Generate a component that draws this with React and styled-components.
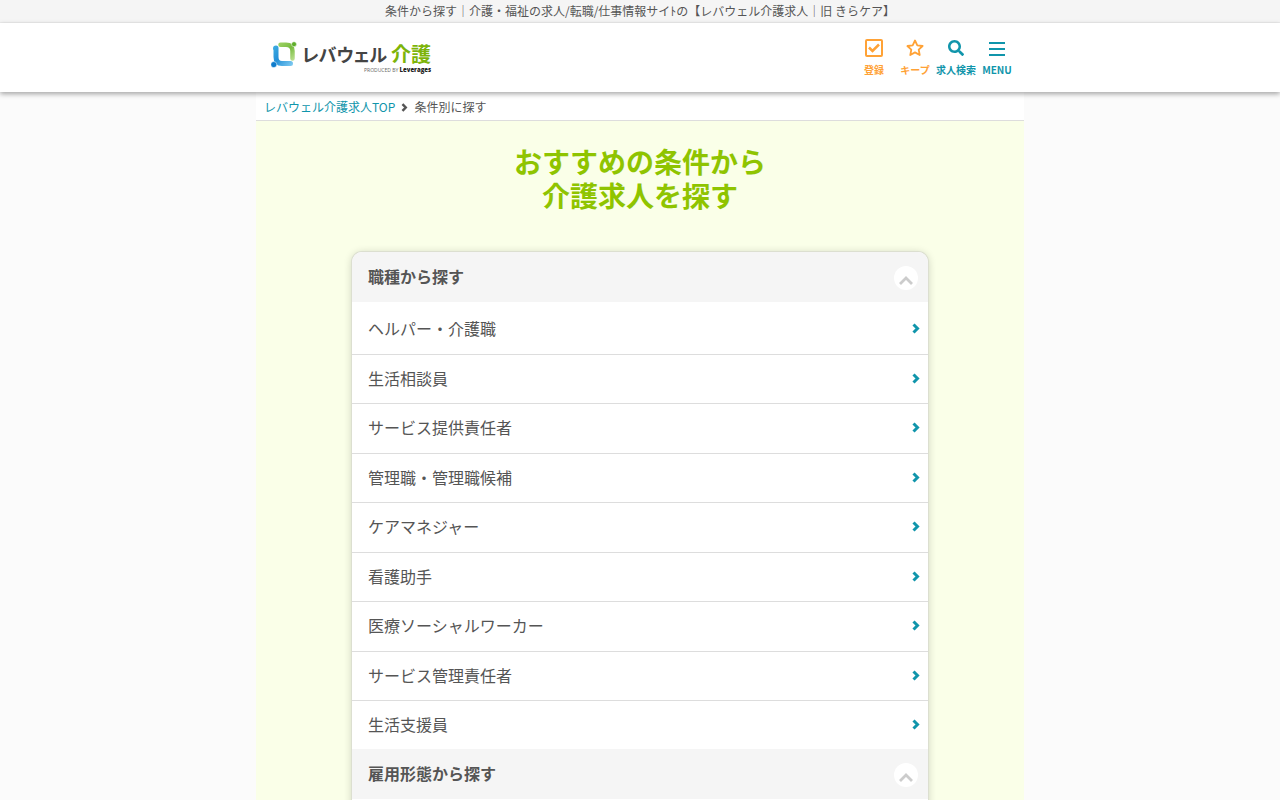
import React, { useState } from 'react';
import styled, { createGlobalStyle } from 'styled-components';
import { FaSearch } from 'react-icons/fa';

const GlobalStyle = createGlobalStyle`
  * {
    box-sizing: border-box;
  }
  body {
    margin: 0;
    background: #fbfbfb;
    color: #555;
    font-family: 'Noto Sans CJK JP', sans-serif;
    font-size: 16px;
    line-height: 26px;
  }
  a {
    color: #1095ab;
    text-decoration: none;
  }
`;

const sections = [
  {
    title: '職種から探す',
    items: [
      'ヘルパー・介護職',
      '生活相談員',
      'サービス提供責任者',
      '管理職・管理職候補',
      'ケアマネジャー',
      '看護助手',
      '医療ソーシャルワーカー',
      'サービス管理責任者',
      '生活支援員',
    ],
  },
  {
    title: '雇用形態から探す',
    items: [],
  },
];

const LogoMark = () => (
  <svg width='26' height='27' viewBox='0 0 26 27' fill='none' aria-hidden='true'>
    <defs>
      <linearGradient id='logoBlue' x1='2' y1='8' x2='21' y2='24' gradientUnits='userSpaceOnUse'>
        <stop offset='0' stopColor='#3ba9e0' />
        <stop offset='0.4' stopColor='#2490d8' />
        <stop offset='1' stopColor='#7cc8f0' />
      </linearGradient>
      <linearGradient id='logoGreen' x1='8' y1='3' x2='22' y2='19' gradientUnits='userSpaceOnUse'>
        <stop offset='0' stopColor='#9bd062' />
        <stop offset='0.5' stopColor='#78bc40' />
        <stop offset='1' stopColor='#b8de8c' />
      </linearGradient>
    </defs>
    <path d='M4.5 7.5Q4.5 7 5 7V16Q5 22.5 11 22.5H19.5' stroke='url(#logoBlue)' strokeWidth='5' strokeLinecap='round' strokeLinejoin='round' />
    <path d='M9.5 3.8H15Q21.5 3.8 21.5 10V17.5' stroke='url(#logoGreen)' strokeWidth='4.5' strokeLinecap='round' />
    <circle cx='2.8' cy='23.6' r='3' fill='#0f7ccc' stroke='#fff' strokeWidth='0.5' />
    <circle cx='23' cy='3.2' r='2.5' fill='#5fae2b' stroke='#fff' strokeWidth='0.5' />
  </svg>
);

const CheckIcon = () => (
  <svg width='18' height='18' viewBox='0 0 18 18' fill='none' stroke='currentColor' strokeWidth='2'>
    <rect x='1' y='1' width='16' height='16' rx='1' />
    <path d='M4 8.5 L7.5 12 L14 5.5' strokeWidth='2.5' />
  </svg>
);

const StarIcon = () => (
  <svg width='18' height='18' viewBox='0 0 18 18' fill='none' stroke='currentColor' strokeWidth='1.8' strokeLinejoin='round'>
    <path d='M9 1.5 L11.3 6.3 L16.6 7 L12.7 10.7 L13.7 16 L9 13.4 L4.3 16 L5.3 10.7 L1.4 7 L6.7 6.3 Z' />
  </svg>
);

const MenuIcon = () => (
  <svg width='16' height='16' viewBox='0 0 16 16' fill='currentColor'>
    <path d='M0 2h16v2H0zM0 8h16v2H0zM0 14h16v2H0z' />
  </svg>
);

const ArrowRight = ({ width = 8, height = 11 }) => (
  <svg width={width} height={height} viewBox='0 0 8 11' fill='none' stroke='currentColor' strokeWidth='3'>
    <path d='M1.5 1.5 L5.5 5.5 L1.5 9.5' />
  </svg>
);

const ArrowUp = () => (
  <svg width='14' height='9' viewBox='0 0 14 9' fill='none' stroke='currentColor' strokeWidth='2.8'>
    <path d='M1 8 L7 2 L13 8' />
  </svg>
);

const SearchSection = ({ title, items }) => {
  const [open, setOpen] = useState(true);
  return (
    <section>
      <SectionTitle>
        <SectionButton type='button' aria-expanded={open} onClick={() => setOpen(!open)}>
          {title}
          <Toggle $open={open}>
            <ArrowUp />
          </Toggle>
        </SectionButton>
      </SectionTitle>
      {open && (
        <List>
          {items.map((item) => (
            <Item key={item}>
              <ItemLink href='#'>
                {item}
                <ArrowRight />
              </ItemLink>
            </Item>
          ))}
        </List>
      )}
    </section>
  );
};

const App = () => {
  return (
    <>
      <GlobalStyle />
      <TopText>条件から探す｜介護・福祉の求人/転職/仕事情報サイﾄの【レバウェル介護求人｜旧 きらケア】</TopText>
      <Header>
        <HeaderInner>
          <Logo href='#' aria-label='レバウェル介護'>
            <LogoMark />
            <LogoText>
              <LogoName>
                レバウェル<LogoCare>介護</LogoCare>
              </LogoName>
              <LogoSub>
                PRODUCED BY <b>Leverages</b>
              </LogoSub>
            </LogoText>
          </Logo>
          <Nav>
            <NavLink href='#' $accent>
              <NavIcon>
                <CheckIcon />
              </NavIcon>
              登録
            </NavLink>
            <NavLink href='#' $accent>
              <NavIcon>
                <StarIcon />
              </NavIcon>
              キープ
            </NavLink>
            <NavLink href='#'>
              <NavIcon>
                <FaSearch size={16} />
              </NavIcon>
              求人検索
            </NavLink>
            <MenuButton type='button'>
              <NavIcon>
                <MenuIcon />
              </NavIcon>
              MENU
            </MenuButton>
          </Nav>
        </HeaderInner>
      </Header>
      <Container>
        <Breadcrumb>
          <a href='#'>レバウェル介護求人TOP</a>
          <ArrowRight width={7} height={9} />
          <span>条件別に探す</span>
        </Breadcrumb>
        <Main>
          <Title>
            おすすめの条件から
            <br />
            介護求人を探す
          </Title>
          <Card>
            {sections.map((section) => (
              <SearchSection key={section.title} {...section} />
            ))}
          </Card>
        </Main>
      </Container>
    </>
  );
};

export default App;

const TopText = styled.p`
  margin: 0;
  background: #f5f5f5;
  border-bottom: 1px solid #eee;
  font-size: 12px;
  line-height: 22px;
  text-align: center;
`;

const Header = styled.header`
  position: relative;
  background: #fff;
  box-shadow: 0 2px 5px rgba(0, 0, 0, 0.35);
`;

const HeaderInner = styled.div`
  display: flex;
  justify-content: space-between;
  align-items: flex-start;
  max-width: 768px;
  margin: 0 auto;
  padding: 15px 7px 12px 15px;
`;

const Logo = styled.a`
  display: flex;
  gap: 5px;
  padding-top: 3px;
`;

const LogoText = styled.span`
  display: flex;
  flex-direction: column;
`;

const LogoName = styled.span`
  display: flex;
  align-items: center;
  gap: 4px;
  color: #444;
  font-size: 18px;
  font-weight: 700;
  line-height: 26px;
  font-feature-settings: 'palt';
  white-space: nowrap;
`;

const LogoCare = styled.span`
  color: #7db40a;
  font-size: 20px;
`;

const LogoSub = styled.span`
  color: #666;
  font-family: 'Open Sans', sans-serif;
  font-size: 5px;
  line-height: 6px;
  text-align: right;
  b {
    color: #222;
    font-size: 6px;
    font-weight: 800;
  }
`;

const Nav = styled.nav`
  display: flex;
  gap: 1px;
`;

const NavLink = styled.a`
  display: flex;
  flex-direction: column;
  align-items: center;
  gap: 2px;
  width: 40px;
  color: ${(props) => (props.$accent ? '#ffa236' : '#1095ab')};
  font-size: 10px;
  font-weight: 700;
  line-height: 20px;
  white-space: nowrap;
`;

const MenuButton = styled(NavLink).attrs({ as: 'button' })`
  padding: 0;
  border: 0;
  background: none;
  font-family: inherit;
  cursor: pointer;
`;

const NavIcon = styled.span`
  display: flex;
  align-items: center;
  height: 20px;
`;

const Container = styled.div`
  max-width: 768px;
  margin: 0 auto;
  background: #fff;
`;

const Breadcrumb = styled.nav`
  display: flex;
  align-items: center;
  gap: 6px;
  padding: 5px 8px 3px;
  border-bottom: 1px solid #ddd;
  font-size: 12px;
  line-height: 20px;
`;

const Main = styled.main`
  padding: 23px 0 40px;
  background: #faffe8;
`;

const Title = styled.h1`
  margin: 0 0 40px;
  color: #8fc400;
  font-size: 28px;
  font-weight: 700;
  line-height: 34px;
  text-align: center;
`;

const Card = styled.div`
  width: 75%;
  margin: 0 auto;
  padding-bottom: 16px;
  overflow: hidden;
  border-radius: 10px;
  background: #fff;
  box-shadow: 0 0 0 1px #dcdfd0, 0 1px 8px rgba(0, 0, 0, 0.2);
`;

const SectionTitle = styled.h2`
  margin: 0;
  font-size: 16px;
`;

const SectionButton = styled.button`
  display: flex;
  justify-content: space-between;
  align-items: flex-start;
  width: 100%;
  padding: 12px 10px 12px 16px;
  border: 0;
  background: #f5f5f5;
  color: #555;
  font-family: inherit;
  font-size: 16px;
  font-weight: 700;
  line-height: 24px;
  text-align: left;
  cursor: pointer;
`;

const Toggle = styled.span`
  display: flex;
  justify-content: center;
  align-items: center;
  width: 24px;
  height: 24px;
  margin-top: 2px;
  padding-top: 4px;
  border-radius: 50%;
  background: #fff;
  color: #ccc;
  transform: ${(props) => (props.$open ? 'none' : 'rotate(180deg)')};
`;

const List = styled.ul`
  margin: 0;
  padding: 3px 0 0;
  list-style: none;
`;

const Item = styled.li`
  border-bottom: 1px solid #ddd;
  &:last-child {
    border-bottom: 0;
  }
`;

const ItemLink = styled.a`
  display: flex;
  justify-content: space-between;
  align-items: center;
  padding: 10px 8px 13px 16px;
  color: #555;
  ${Item}:nth-child(even) &,
  ${Item}:last-child & {
    padding-bottom: 12px;
  }
  svg {
    color: #1095ab;
  }
`;
